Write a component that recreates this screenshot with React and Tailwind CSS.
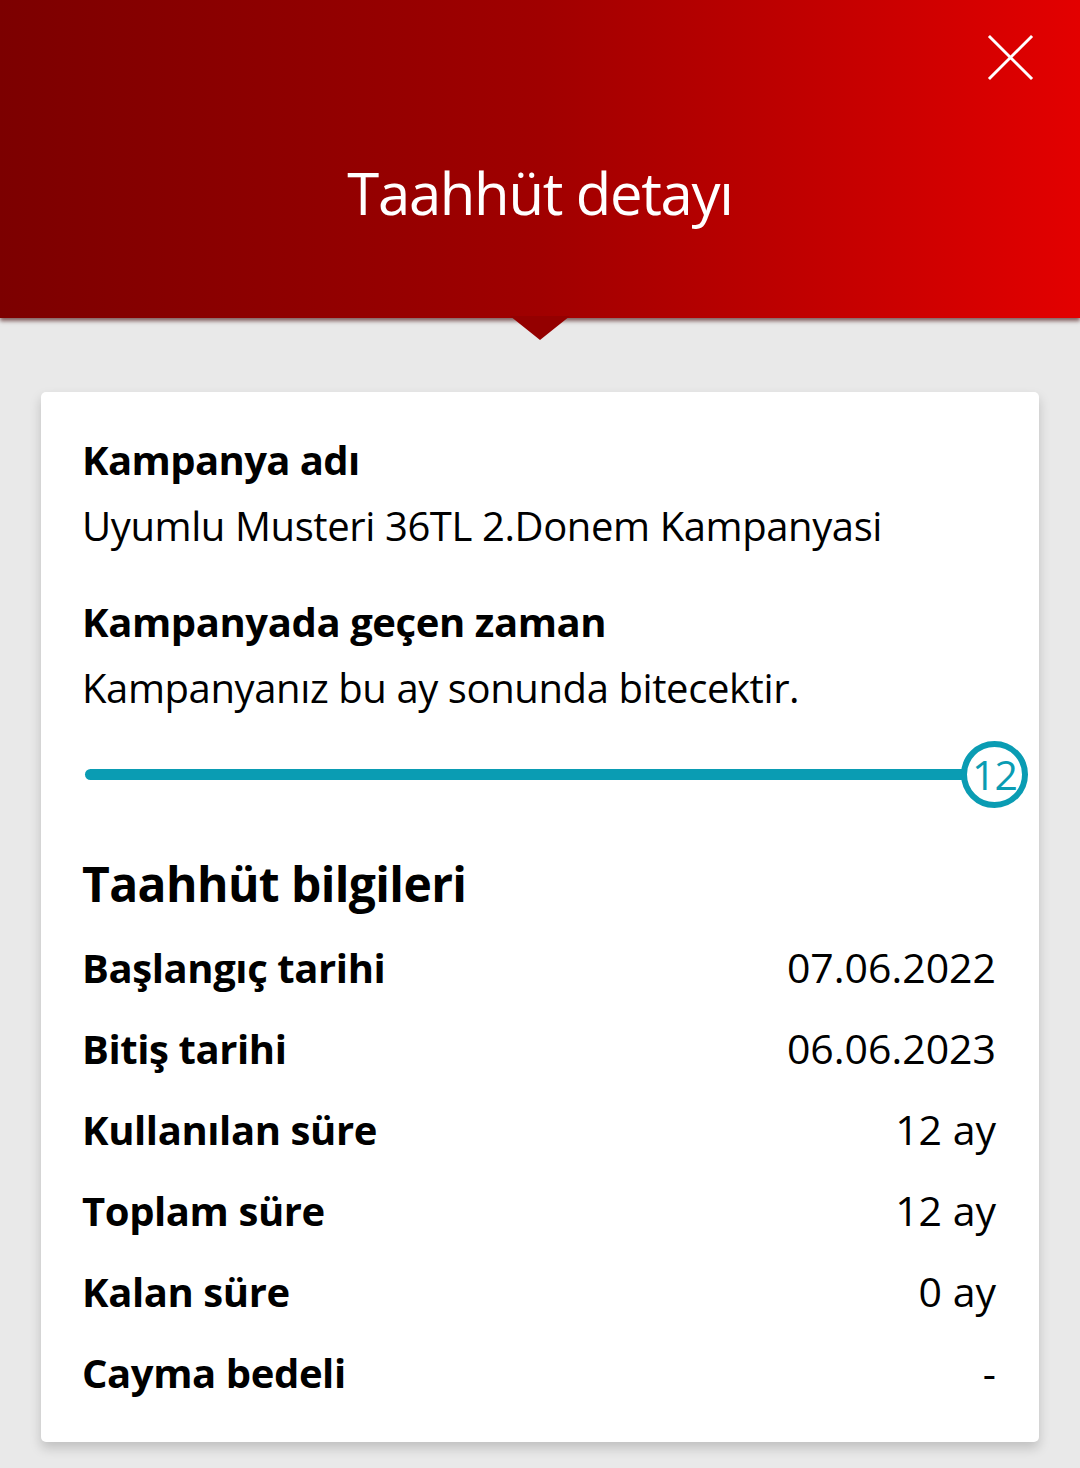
export default function App() {
    const rows = [
        { label: "Başlangıç tarihi", value: "07.06.2022" },
        { label: "Bitiş tarihi", value: "06.06.2023" },
        { label: "Kullanılan süre", value: "12 ay" },
        { label: "Toplam süre", value: "12 ay" },
        { label: "Kalan süre", value: "0 ay" },
        { label: "Cayma bedeli", value: "-" },
    ];

    return (
        <div className="w-[1080px] h-[1468px] bg-[#e9e9e9] overflow-hidden font-['Open_Sans',sans-serif] text-black">
            {/* header */}
            <div className="relative h-[318px] bg-gradient-to-r from-[#7c0000] via-[#a00000] to-[#e30000] shadow-[0_3px_4px_rgba(60,0,0,0.6)]">
                <button className="absolute right-[46px] top-[34px] w-[47px] h-[47px]">
                    <svg viewBox="0 0 48 48" className="w-full h-full">
                        <path d="M2 2 L46 46 M46 2 L2 46" stroke="white" strokeWidth="3" fill="none" />
                    </svg>
                </button>
                <div className="flex justify-center pt-[160px]">
                    <h1 className="text-white text-[58px] tracking-[-1.3px] leading-[66px]">Taahhüt detayı</h1>
                </div>
                <div className="absolute left-[510px] top-[316px] w-0 h-0 border-l-[30px] border-r-[30px] border-t-[24px] border-l-transparent border-r-transparent border-t-[#940000]" />
            </div>

            {/* card */}
            <div className="mx-[41px] mt-[74px] bg-white rounded-[5px] shadow-[0_6px_12px_rgba(0,0,0,0.18)] pl-[41px] pr-[43px] pt-[40px] pb-[41px]">
                <div className="text-[40px] font-bold leading-[56px] tracking-[-0.6px]">Kampanya adı</div>
                <div className="text-[40px] leading-[56px] mt-[10px] tracking-[-0.4px]">Uyumlu Musteri 36TL 2.Donem Kampanyasi</div>

                <div className="text-[40px] font-bold leading-[56px] mt-[40px] tracking-[-0.4px]">Kampanyada geçen zaman</div>
                <div className="text-[40px] leading-[56px] mt-[10px] tracking-[-0.4px]">Kampanyanız bu ay sonunda bitecektir.</div>

                <div className="flex items-center mt-[25px] -mr-[32px]">
                    <div className="flex-1 h-[11px] ml-[3px] bg-[#0a9cb3] rounded-l-full" />
                    <div className="w-[67px] h-[67px] rounded-full border-[6px] border-[#0a9cb3] flex items-center justify-center text-[#0a9cb3] text-[41px] leading-none tracking-[-1px] -ml-[3px]">12</div>
                </div>

                <div className="text-[48px] font-bold leading-[60px] mt-[46px] tracking-[-0.6px]">Taahhüt bilgileri</div>
                <div className="mt-[26px] flex flex-col gap-[25px]">
                    {rows.map((row) => (
                        <div key={row.label} className="flex justify-between items-center h-[56px]">
                            <span className="text-[40px] font-bold tracking-[-0.4px]">{row.label}</span>
                            <span className="text-[41px] tracking-[0px]">{row.value}</span>
                        </div>
                    ))}
                </div>
            </div>
        </div>
    );
}
